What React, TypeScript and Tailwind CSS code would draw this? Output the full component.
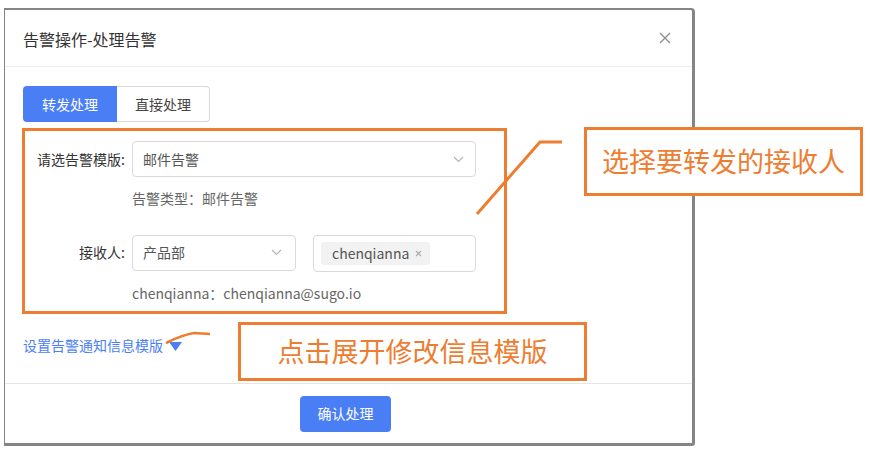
import React from 'react';

const font = { fontFamily: '"Noto Sans CJK SC", "Noto Sans", sans-serif' };

function Chevron() {
  return (
    <svg width="11" height="7" viewBox="0 0 11 7" className="shrink-0">
      <path d="M1 1l4.5 4.5L10 1" fill="none" stroke="#b5b5b5" strokeWidth="1.2" />
    </svg>
  );
}

export default function App() {
  return (
    <div className="relative w-[878px] h-[465px] bg-white overflow-hidden text-[#333]" style={font}>
      {/* modal */}
      <div className="ml-[4px] mt-[8px] w-[691px] h-[438px] flex flex-col bg-white border-l border-t-2 border-r-[3px] border-b-[3px] border-[#858585] rounded-tr-[4px] rounded-br-[3px]">
        <div className="h-[57px] shrink-0 flex items-center justify-between pl-[18px] pr-[21px] border-b border-[#ececec]">
          <span className="text-[16px] leading-[22px] text-[#333] pt-[2px]">告警操作-处理告警</span>
          <svg width="12" height="12" viewBox="0 0 12 12">
            <path d="M1 1l10 10M11 1L1 11" stroke="#8c8c8c" strokeWidth="1.3" />
          </svg>
        </div>

        <div className="flex-1 pt-[19px] pl-[18px]">
          <div className="flex h-[36px] w-[187px] text-[14px]">
            <div className="w-[94px] flex items-center justify-center bg-[#4a7ef5] text-white rounded-l-[4px]">转发处理</div>
            <div className="w-[93px] flex items-center justify-center border border-l-0 border-[#d9d9d9] rounded-r-[4px] text-[#444]">直接处理</div>
          </div>

          <div className="mt-[19px] flex items-center">
            <div className="w-[102px] text-right text-[14px] text-[#333]">请选告警模版:</div>
            <div className="ml-[7px] w-[344px] h-[36px] flex items-center justify-between border border-[#d9d9d9] rounded-[4px] pl-[10px] pr-[11px] text-[14px] text-[#555]">
              <span>邮件告警</span>
              <Chevron />
            </div>
          </div>
          <div className="ml-[109px] mt-[11px] leading-[20px] text-[14px] text-[#666]">告警类型：邮件告警</div>

          <div className="mt-[25px] flex items-center">
            <div className="w-[102px] text-right text-[14px] text-[#333]">接收人:</div>
            <div className="ml-[7px] w-[164px] h-[36px] flex items-center justify-between border border-[#d9d9d9] rounded-[4px] pl-[10px] pr-[13px] text-[14px] text-[#555]">
              <span>产品部</span>
              <Chevron />
            </div>
            <div className="ml-[17px] w-[163px] h-[37px] mt-[2px] flex items-center border border-[#d9d9d9] rounded-[4px] pl-[7px]">
              <div className="h-[23px] w-[109px] flex items-center bg-[#f2f2f2] rounded-[3px] pl-[11px] text-[14px] text-[#555]">
                <span>chenqianna</span>
                <svg width="7" height="7" viewBox="0 0 7 7" className="ml-[6px]">
                  <path d="M1 1l5 5M6 1L1 6" stroke="#aaa" strokeWidth="1.1" />
                </svg>
              </div>
            </div>
          </div>
          <div className="ml-[109px] mt-[11px] leading-[20px] text-[14px] text-[#666]">chenqianna：chenqianna@sugo.io</div>

          <div className="mt-[32px] flex items-center leading-[20px] text-[14px] text-[#4a7ef5]">
            <span>设置告警通知信息模版</span>
            <svg width="13" height="9" viewBox="0 0 13 9" className="ml-[6px] mt-[3px]">
              <path d="M0 0h13L6.5 9z" fill="#4a7ef5" />
            </svg>
          </div>
        </div>

        <div className="h-[60px] shrink-0 flex items-center justify-center border-t border-[#e6e6e6] pr-[6px]">
          <div className="w-[91px] h-[36px] flex items-center justify-center bg-[#4a7ef5] text-white text-[14px] rounded-[4px]">确认处理</div>
        </div>
      </div>

      {/* annotations */}
      <div className="absolute left-[22px] top-[128px] w-[485px] h-[186px] border-[3px] border-[#ed7d31]" />
      <div className="absolute left-[238px] top-[322px] w-[349px] h-[59px] border-[3px] border-[#ed7d31] bg-white flex items-center justify-center text-[27px] text-[#ed7d31]">
        点击展开修改信息模版
      </div>
      <div className="absolute left-[584px] top-[127px] w-[279px] h-[69px] border-[3px] border-[#ed7d31] bg-white flex items-center justify-center text-[27px] text-[#ed7d31]">
        选择要转发的接收人
      </div>
      <svg className="absolute left-0 top-0 pointer-events-none" width="878" height="465">
        <polyline points="477,214 540,142 562,142" fill="none" stroke="#ed7d31" strokeWidth="3" />
        <path d="M166 343 Q182 335 194 333 L210 334" fill="none" stroke="#ed7d31" strokeWidth="2.6" />
      </svg>
    </div>
  );
}
